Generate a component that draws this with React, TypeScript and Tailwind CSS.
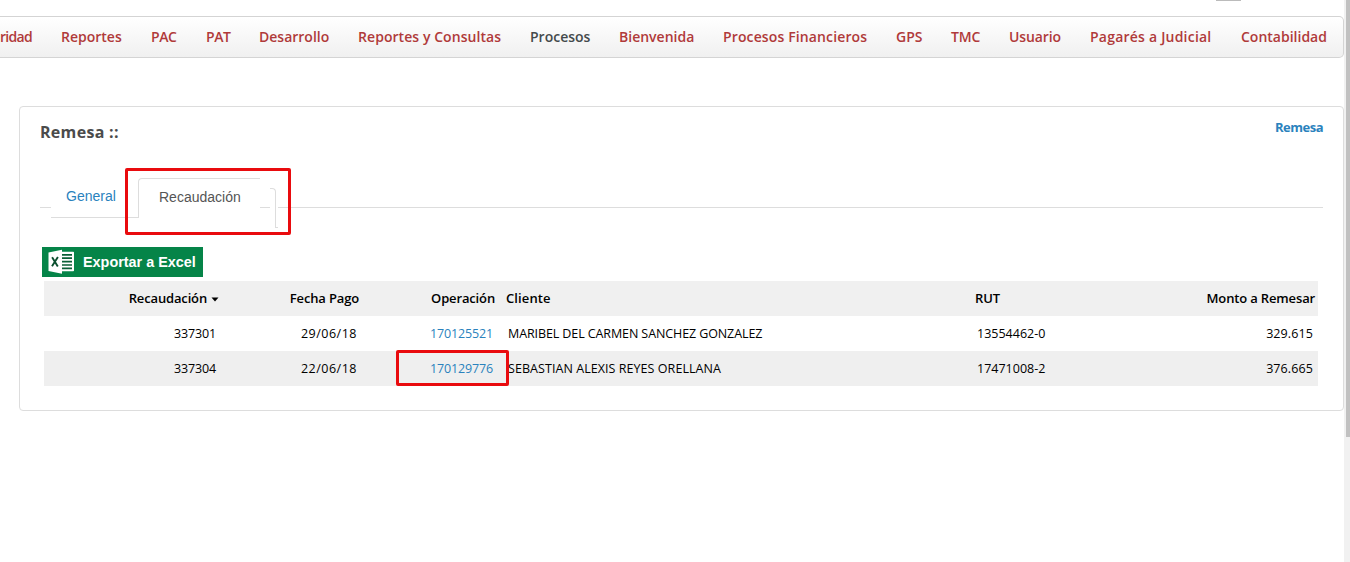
type NavItem = { label: string; cell: string; active?: boolean };

const navItems: NavItem[] = [
  { label: "ridad", cell: "w-[61px] tracking-[-0.7px]" },
  { label: "Reportes", cell: "w-[90px]" },
  { label: "PAC", cell: "w-[55px] tracking-[-0.4px]" },
  { label: "PAT", cell: "w-[53px] tracking-[-0.4px]" },
  { label: "Desarrollo", cell: "w-[99px]" },
  { label: "Reportes y Consultas", cell: "w-[172px] tracking-[0.06px]" },
  { label: "Procesos", cell: "w-[89px]", active: true },
  { label: "Bienvenida", cell: "w-[104px]" },
  { label: "Procesos Financieros", cell: "w-[173px] tracking-[0.13px]" },
  { label: "GPS", cell: "w-[55px]" },
  { label: "TMC", cell: "w-[58px] tracking-[-0.2px]" },
  { label: "Usuario", cell: "w-[81px] tracking-[-0.1px]" },
  { label: "Pagarés a Judicial", cell: "w-[151px] tracking-[0.22px]" },
  { label: "Contabilidad", cell: "w-[87px]" },
];

type Row = {
  id: string;
  date: string;
  operation: string;
  client: string;
  clientTracking: string;
  rut: string;
  amount: string;
  marked?: boolean;
};

const rows: Row[] = [
  {
    id: "337301",
    date: "29/06/18",
    operation: "170125521",
    client: "MARIBEL DEL CARMEN SANCHEZ GONZALEZ",
    clientTracking: "tracking-[-0.1px]",
    rut: "13554462-0",
    amount: "329.615",
  },
  {
    id: "337304",
    date: "22/06/18",
    operation: "170129776",
    client: "SEBASTIAN ALEXIS REYES ORELLANA",
    clientTracking: "tracking-[0.06px]",
    rut: "17471008-2",
    amount: "376.665",
    marked: true,
  },
];

const columns = "grid grid-cols-[175px_141px_136px_469px_172px_181px] items-center h-[35px]";

function ExcelIcon() {
  return (
    <svg width="27" height="26" viewBox="0 0 27 26" className="shrink-0">
      <path d="M13 2.8h12.2a.8.8 0 0 1 .8.8v17.8a.8.8 0 0 1-.8.8H13z" fill="#fff" />
      <path d="M14 5.8h10M14 9.2h10M14 12.6h10M14 16h10M14 19.4h10" stroke="#0a5f37" strokeWidth="1.7" />
      <path d="M.5 3.4 14 .8v24L.5 22z" fill="#fff" />
      <path d="m4.1 8.2 5.7 9.2M9.9 8.1l-5.9 9.2" stroke="#0b4f2f" strokeWidth="1.9" fill="none" />
    </svg>
  );
}

function Navigation() {
  return (
    <nav className="mt-4 flex h-[42px] w-[1344px] items-center overflow-hidden whitespace-nowrap rounded-r-[5px] border border-l-0 border-[#d4d4d4] bg-linear-to-b from-white to-[#f0f0f0] pb-px text-[14px] font-semibold text-[#b03a3a]">
      <div className="flex">
        {navItems.map((item) => (
          <a key={item.label} className={`shrink-0 ${item.cell} ${item.active ? "text-[#444a4c]" : ""}`}>
            {item.label}
          </a>
        ))}
      </div>
    </nav>
  );
}

function Tabs() {
  return (
    <div className="relative mt-[26px] flex h-[66px] items-start font-['Liberation_Sans',sans-serif] text-[14px] leading-5">
      <div className="mt-[39px] h-px w-[11px] bg-[#ddd]" />
      <div className="mt-[9px] h-[41px] w-[87px] border-b border-[#ddd] pl-[15px] pt-[9px] text-[#2a82bd]">General</div>
      <div className="mt-[10px] h-10 w-[122px] rounded-tl-[4px] border-l border-t border-[#ddd] pl-5 pt-2 text-[#555]">
        Recaudación
      </div>
      <div className="mt-[39px] h-px w-[10px] bg-[#ddd]" />
      <div className="mt-5 h-10 w-[6px] rounded-tr-[4px] border-r border-t border-[#ddd]" />
      <div className="mt-[59px] h-px w-[2px] bg-[#ddd]" />
      <div className="mt-[39px] h-px flex-1 bg-[#ddd]" />
      <div className="absolute left-[85px] top-0 h-[67px] w-[166px] rounded-[2px] border-3 border-[#e90b0e]" />
    </div>
  );
}

function Table() {
  return (
    <div className="ml-1 mt-1 w-[1274px] text-[12.5px] text-black">
      <div className={`${columns} bg-[#f0f0f0] text-[13px] font-semibold tracking-[-0.15px]`}>
        <div className="flex items-center justify-end">
          <span>Recaudación</span>
          <svg width="8" height="5" viewBox="0 0 8 5" className="ml-1 mt-[2px]">
            <path d="M.5.5h7L4 4.5z" fill="#000" />
          </svg>
        </div>
        <div className="pr-px text-right">Fecha Pago</div>
        <div className="pr-px text-right">Operación</div>
        <div className="pl-[10px] tracking-[0.1px]">Cliente</div>
        <div className="pl-[10px]">RUT</div>
        <div className="pr-[3px] text-right">Monto a Remesar</div>
      </div>
      {rows.map((row) => (
        <div key={row.id} className={`${columns} pt-[2px] ${row.marked ? "bg-[#efefef]" : "bg-white"}`}>
          <div className="pr-[3px] text-right tracking-[-0.15px]">{row.id}</div>
          <div className="pr-[3px] text-right tracking-[0.5px]">{row.date}</div>
          <div className="relative pr-[3px] text-right tracking-[-0.15px] text-[#2a82bd]">
            {row.operation}
            {row.marked && (
              <div className="absolute -top-[10px] left-[36px] h-[36px] w-[113px] rounded-[2px] border-3 border-[#e90b0e]" />
            )}
          </div>
          <div className={`pl-3 ${row.clientTracking}`}>{row.client}</div>
          <div className="pl-3">{row.rut}</div>
          <div className="pr-[5px] text-right tracking-[0.1px]">{row.amount}</div>
        </div>
      ))}
    </div>
  );
}

export default function App() {
  return (
    <div className="flex h-[562px] w-[1350px] overflow-hidden bg-white font-['Open_Sans',sans-serif]">
      <div className="relative w-[1344px] shrink-0">
        <div className="absolute left-[1216px] top-0 h-px w-[25px] bg-[#bbb]" />
        <Navigation />
        <main className="ml-[19px] mt-12 h-[305px] w-[1325px] rounded-[4px] border border-[#ddd] px-5">
          <div className="flex h-[35px] justify-between">
            <h1 className="mt-[13px] text-[16px] font-bold leading-6 tracking-[0.3px] text-[#4b4b4b]">Remesa ::</h1>
            <a className="mt-[10px] text-[13px] font-bold leading-5 tracking-[-0.5px] text-[#2a82bd]">Remesa</a>
          </div>
          <Tabs />
          <button className="ml-[2px] mt-[13px] flex h-[30px] w-[161px] items-center bg-[#058448] pl-[6px] font-['Liberation_Sans',sans-serif] font-bold text-white">
            <ExcelIcon />
            <span className="ml-[8px] whitespace-nowrap pt-[2px] text-[14.4px]">Exportar a Excel</span>
          </button>
          <Table />
        </main>
      </div>
      <aside className="flex w-[6px] justify-end bg-[#f1f1f1]">
        <div className="h-[437px] w-1 bg-[#c1c1c1]" />
      </aside>
    </div>
  );
}
